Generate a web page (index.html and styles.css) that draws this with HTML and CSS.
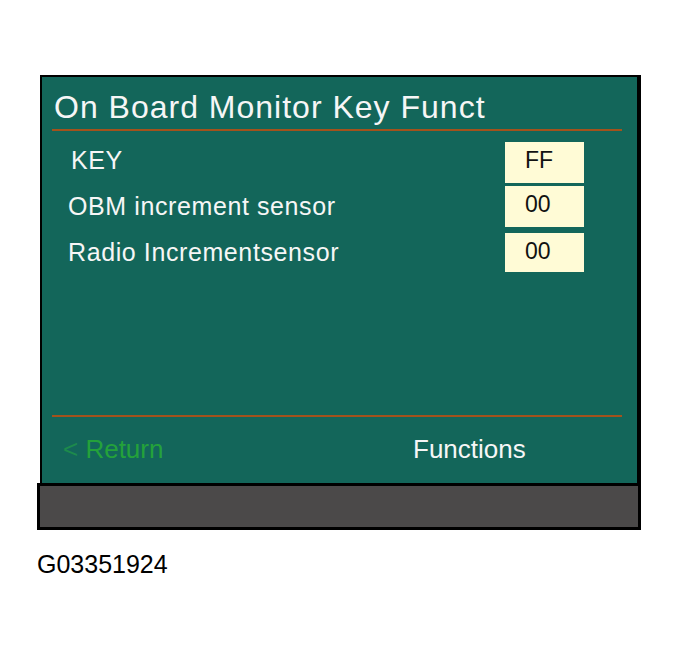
FILE: index.html
```html
<!DOCTYPE html>
<html>
<head>
<meta charset="utf-8">
<link rel="stylesheet" href="styles.css">
</head>
<body>
<div class="device">
  <div class="screen">
    <div class="title">On Board Monitor Key Funct</div>
    <div class="rule"></div>
    <div class="rows">
      <div class="row r1"><span class="label key">KEY</span><span class="val">FF</span></div>
      <div class="row r2"><span class="label">OBM increment sensor</span><span class="val">00</span></div>
      <div class="row r3"><span class="label">Radio Incrementsensor</span><span class="val">00</span></div>
    </div>
    <div class="rule bottom"></div>
    <div class="footer">
      <span class="ret"><span class="lt">&lt;</span> Return</span>
      <span class="func">Functions</span>
    </div>
  </div>
  <div class="bar"></div>
</div>
<div class="caption">G03351924</div>
</body>
</html>
```
FILE: styles.css
```css
html, body {
  margin: 0;
  padding: 0;
  background: #ffffff;
}
body {
  font-family: "Liberation Sans", Arial, sans-serif;
}
.device {
  margin: 75px 0 0 37px;
  width: 604px;
}
.screen {
  margin-left: 3px;
  width: 595px;
  height: 406px;
  border-style: solid;
  border-color: #000;
  border-width: 2px 4px 0 2px;
  background: #13665a;
  display: flex;
  flex-direction: column;
  color: #f6f6f6;
}
.title {
  padding: 8px 0 0 12px;
  height: 44px;
  line-height: 44px;
  font-size: 32px;
  letter-spacing: 1px;
  white-space: nowrap;
}
.rule {
  height: 2px;
  margin: 0 15px 0 10px;
  background: #a3521c;
}
.rows {
  flex: 1;
  padding: 11px 53px 0 26px;
}
.row {
  display: flex;
  align-items: center;
  justify-content: space-between;
  height: 41px;
}
.r2 { margin-top: 3px; }
.r3 { margin-top: 6px; height: 39px; }
.label {
  font-size: 25px;
  letter-spacing: 0.6px;
  white-space: nowrap;
}
.key { padding: 0 0 4px 3px; }
.val {
  width: 59px;
  height: 100%;
  padding-left: 20px;
  box-sizing: content-box;
  background: #fffbd6;
  color: #111;
  font-size: 23px;
  line-height: 36px;
}
.footer {
  height: 55px;
  padding: 11px 0 0 21px;
  display: grid;
  grid-template-columns: 350px 1fr;
  line-height: 42px;
  font-size: 26px;
}
.ret {
  color: #24a23a;
}
.lt {
  color: #1d8a4c;
}
.func {
  color: #f6f6f6;
}
.bar {
  height: 41px;
  border: 3px solid #000;
  background: #4b4949;
}
.caption {
  margin: 19px 0 0 37px;
  font-size: 25px;
  line-height: 30px;
  color: #000;
}
```
